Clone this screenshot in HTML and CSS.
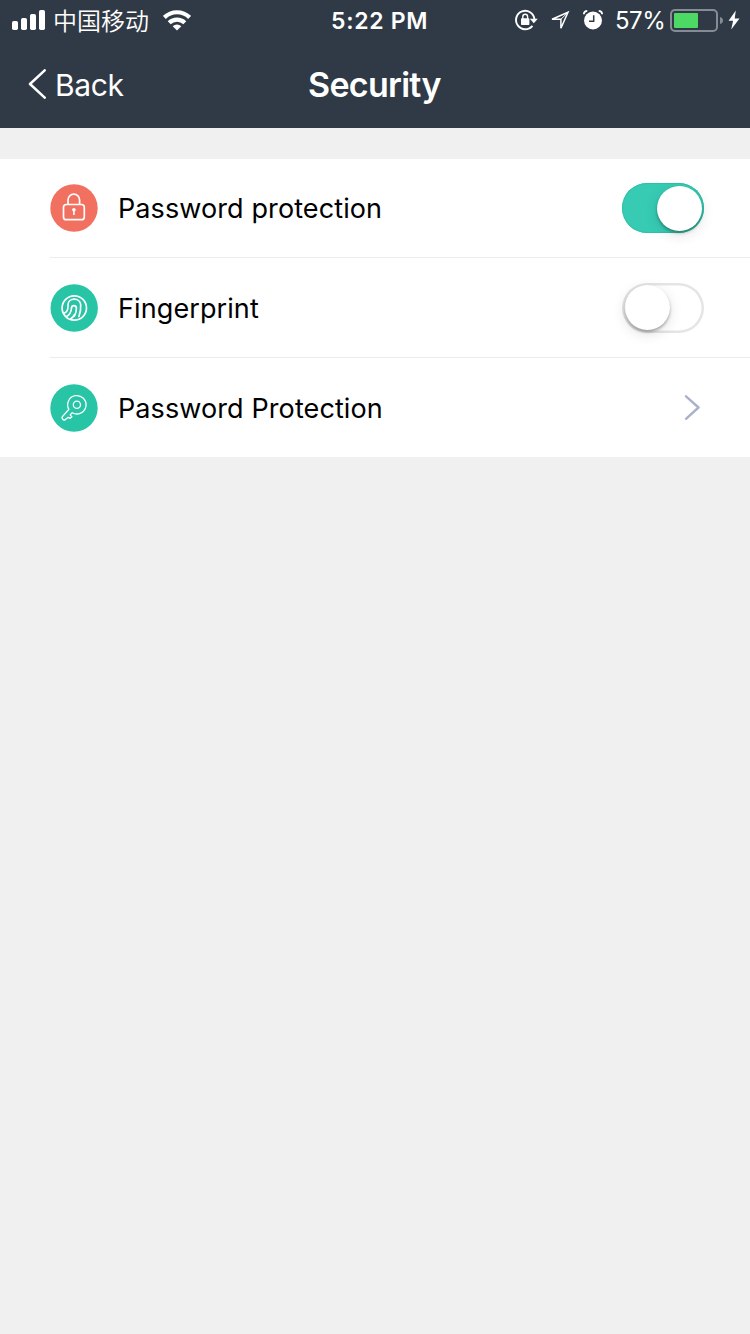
FILE: index.html
```html
<!DOCTYPE html>
<html lang="en">
<head>
<meta charset="utf-8">
<title>Security</title>
<link rel="stylesheet" href="styles.css">
</head>
<body>
<header class="header">
  <div class="status">
    <div class="status-left">
      <svg class="signal" width="34" height="20" viewBox="0 0 34 20" fill="#fff"><rect x="0" y="11" width="6" height="9" rx="1.7"/><rect x="9" y="8" width="6" height="12" rx="1.7"/><rect x="18" y="4" width="6" height="16" rx="1.7"/><rect x="27" y="0" width="6" height="20" rx="1.7"/></svg>
      <span class="carrier">中国移动</span>
      <svg class="wifi" width="28" height="21" viewBox="0 0 28 21"><g fill="none" stroke="#fff" stroke-width="4.2"><path d="M1.4 7.4a18 18 0 0 1 25.2 0"/><path d="M6.200 12.700a11.200 11.200 0 0 1 15.600 0"/></g><path d="M14 20.400 9.700 16.200a6.200 6.200 0 0 1 8.600 0z" fill="#fff"/></svg>
    </div>
    <span class="clock">5:22 PM</span>
    <div class="status-right">
      <svg class="rotation" width="24" height="22" viewBox="0 0 24 22"><path d="M17.400 16.800A9.200 9.200 0 1 1 19.400 10.200" fill="none" stroke="#fff" stroke-width="1.900"/><path d="M14.800 9.800h8l-4 4.500z" fill="#fff"/><rect x="6" y="9.300" width="8.400" height="6.700" rx=".8" fill="#fff"/><path d="M7.800 10V7.700a2.400 2.400 0 0 1 4.800 0V10" fill="none" stroke="#fff" stroke-width="1.400"/></svg>
      <svg class="location" width="20" height="20" viewBox="0 0 20 20"><path d="M2 9.300 18 2.300 10.900 18.300V9.300z" fill="none" stroke="#fff" stroke-width="1.500"/><path d="m10.900 9.300 7.100-7" stroke="#fff" stroke-width="1"/></svg>
      <svg class="alarm" width="20" height="20" viewBox="0 0 20 20"><circle cx="10" cy="10.500" r="9" fill="#fff"/><path d="M.8 4.200Q1 1 4.300.9M15.700.9Q19 1 19.200 4.200" fill="none" stroke="#fff" stroke-width="1.700"/><path d="M10.700 5.200v6H6" fill="none" stroke="#2f3a46" stroke-width="1.500"/></svg>
      <span class="percent">57%</span>
      <svg class="battery" width="54" height="24" viewBox="0 0 54 24"><rect x="1" y="1" width="46" height="21" rx="4" fill="none" stroke="#868c93" stroke-width="2"/><rect x="4" y="4" width="24" height="15" rx="1" fill="#4cd964"/><path d="M50 8q3 1 3 3.500T50 15z" fill="#868c93"/></svg>
      <svg class="bolt" width="12" height="20" viewBox="0 0 12 20"><path d="M7.800.5.600 10.700h4.500L3.200 19.500l8.300-11H6.700z" fill="#fff"/></svg>
    </div>
  </div>
  <nav class="navbar">
    <a class="back"><svg width="18" height="30" viewBox="0 0 18 30"><path d="M16.700 1.300 2 15l14.700 13.700" fill="none" stroke="#fff" stroke-width="2.500" stroke-linecap="round" stroke-linejoin="round"/></svg><span class="back-label">Back</span></a>
    <h1 class="title">Security</h1>
  </nav>
</header>
<main class="list">
  <div class="row">
    <svg class="icon" width="48" height="48" viewBox="0 0 48 48"><circle cx="24" cy="24" r="23.700" fill="#f1705f"/><g fill="none" stroke="#fff" stroke-width="1.700"><rect x="13.500" y="20.500" width="20.800" height="15.200" rx="2.800"/><path d="M18 20.500v-4.600a5.800 5.800 0 0 1 11.600 0v4.600"/><path d="M23.900 26v5" stroke-width="1.600"/></g><circle cx="23.900" cy="25.800" r="1.800" fill="#fff"/></svg>
    <span class="label">Password protection</span>
    <span class="switch on"><span class="knob"></span></span>
  </div>
  <div class="row">
    <svg class="icon" width="48" height="48" viewBox="0 0 48 48"><circle cx="24.200" cy="24" r="23.700" fill="#27c4a6"/><g fill="none" stroke="#fff" stroke-width="1.700" stroke-linecap="round"><circle cx="24.300" cy="24" r="12.200"/><path d="M14 29.300c3-1 4-2.900 4-6.800v-1.700c0-7.500 12.300-7.500 12.700 0 .3 4.200-.4 8-1.800 11.700"/><path d="M16.500 32.400c3.300-1.500 4.600-3.800 5-8.400.2-3.300 4.700-3.300 4.900 0 .1 3-.8 6-2 8"/><path d="M20.700 34.800c1.700-1 2.900-2.300 3.700-4.200"/></g></svg>
    <span class="label">Fingerprint</span>
    <span class="switch"><span class="knob"></span></span>
  </div>
  <div class="row">
    <svg class="icon" width="48" height="48" viewBox="0 0 48 48"><circle cx="24" cy="24" r="23.700" fill="#27c4a6"/><g fill="none" stroke="#fff" stroke-width="1.300" stroke-linejoin="round"><circle cx="26.900" cy="20.700" r="3.600"/><path d="M18.900 25.400a9.200 9.200 0 1 1 3.300 3.300l-2.100 2.200 1.800 1.800-1.700 1.600-1.900-1-2.900 2.300c-1.800 1.200-4.300-.9-3.100-2.900z"/></g></svg>
    <span class="label">Password Protection</span>
    <svg class="chevron" width="17" height="26" viewBox="0 0 17 26"><path d="M2 1.300 14.500 12.500 2 23.800" fill="none" stroke="#a9b2c7" stroke-width="2.400" stroke-linecap="round" stroke-linejoin="round"/></svg>
  </div>
</main>
</body>
</html>
```
FILE: styles.css
```css
* { box-sizing: border-box; }
body {
  margin: 0;
  min-height: 1334px;
  background: #f0f0f0;
  font-family: Inter, "Noto Sans CJK SC", sans-serif;
  color: #000;
}
svg { display: block; flex: none; }
.header { height: 128px; background: #2f3a46; color: #fff; }
.status {
  height: 40px;
  display: grid;
  grid-template-columns: 331px 1fr 236px;
  align-items: center;
  white-space: nowrap;
}
.status-left, .status-right { display: flex; align-items: center; height: 40px; }
.status-left { padding-left: 12px; }
.carrier { width: 96px; margin-left: 7px; font: 350 24px/38px "Noto Sans CJK SC", sans-serif; }
.wifi { margin-left: 14px; }
.clock { padding-top: 2px; font-size: 23px; font-weight: 600; line-height: 38px; letter-spacing: .7px; }
.rotation { margin-left: 1px; }
.location { margin-left: 11px; }
.alarm { margin-left: 13px; }
.percent { width: 48px; margin-left: 12px; padding-top: 2px; font-size: 24px; line-height: 38px; letter-spacing: -.5px; }
.battery { margin: 1px 0 0 7px; }
.bolt { margin-left: 4px; }
.navbar {
  height: 88px;
  display: grid;
  grid-template-columns: 308px 1fr;
  align-items: center;
}
.back { display: flex; align-items: center; padding-left: 28px; }
.back-label { margin-left: 9px; padding-top: 1px; font-size: 30px; line-height: 38px; letter-spacing: -.4px; }
.title { margin: 0; padding-top: 1px; font-size: 34px; font-weight: 600; line-height: 42px; letter-spacing: -.7px; }
.list { margin-top: 31px; background: #fff; }
.row {
  height: 100px;
  margin-left: 50px;
  padding-right: 46px;
  display: flex;
  align-items: center;
  border-bottom: 1px solid #ececec;
}
.row:first-child { height: 99px; }
.row:last-child { height: 99px; border-bottom: 0; padding-right: 49px; }
.label { flex: 1; margin-left: 20px; padding-top: 2px; font-size: 27px; line-height: 38px; letter-spacing: .1px; white-space: nowrap; }
.switch {
  width: 82px;
  height: 50px;
  padding: 2.5px;
  display: flex;
  align-items: center;
  border-radius: 25px;
  box-shadow: inset 0 0 0 2.5px #e5e5e5;
}
.switch.on { justify-content: flex-end; background: #37cbb4; box-shadow: inset 0 0 0 1px #2fc2a6; }
.knob {
  width: 45px;
  height: 45px;
  border-radius: 50%;
  background: #fff;
  box-shadow: 0 2px 3px rgba(0,0,0,.3), 0 4px 14px rgba(0,0,0,.12);
}
```
